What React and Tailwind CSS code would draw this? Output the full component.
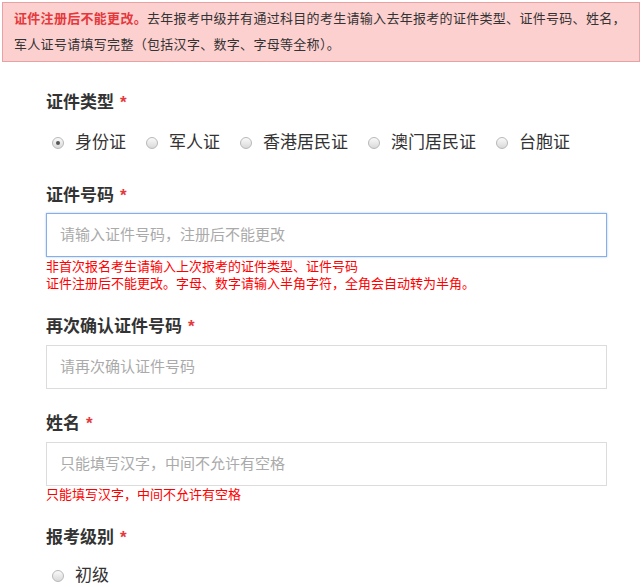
import React from 'react';

const font = { fontFamily: '"Liberation Sans", "Noto Sans CJK SC", sans-serif' };

function Label({ text, className = '' }) {
  return (
    <div className={`h-6 leading-6 text-[17px] font-bold text-[#333] ${className}`}>
      {text}
      <span className="ml-1.5 text-[#e4393c]">*</span>
    </div>
  );
}

function Radio({ label, checked }) {
  return (
    <label className="flex items-center mr-5">
      <span className="relative w-3 h-3 rounded-full border border-[#b8b8b8] bg-gradient-to-b from-[#fafafa] to-[#d9d9d9] flex items-center justify-center">
        {checked && <span className="w-1 h-1 rounded-full bg-[#555]" />}
      </span>
      <span className="ml-[11px] text-[17px] text-[#333]">{label}</span>
    </label>
  );
}

function Field({ placeholder, focused }) {
  return (
    <div
      className={`h-11 w-[561px] border bg-white flex items-center pl-[13px] text-[15px] text-[#aaa] ${
        focused ? 'border-[#86aee8] shadow-[0_0_2px_#a9c6f0]' : 'border-[#dcdcdc]'
      }`}
    >
      {placeholder}
    </div>
  );
}

export default function App() {
  const types = ['身份证', '军人证', '香港居民证', '澳门居民证', '台胞证'];

  return (
    <div className="w-[642px] h-[587px] bg-white overflow-hidden" style={font}>
      <div className="mx-[2px] mt-[2px] border border-[#e7a3a3] bg-[#fdd0d0] pl-[11px] pr-2 py-[3px] text-[13px] leading-[26px] text-[#333] tracking-[0.3px]">
        <div>
          <span className="font-bold text-[#e4393c]">证件注册后不能更改。</span>
          <span>去年报考中级并有通过科目的考生请输入去年报考的证件类型、证件号码、姓名，</span>
        </div>
        <div>军人证号请填写完整（包括汉字、数字、字母等全称）。</div>
      </div>

      <div className="pl-[46px]">
        <Label text="证件类型" className="mt-[29px]" />
        <div className="mt-4 h-6 flex items-center pl-[6px]">
          {types.map((t, i) => (
            <Radio key={t} label={t} checked={i === 0} />
          ))}
        </div>

        <Label text="证件号码" className="mt-[29px]" />
        <div className="mt-[5px]">
          <Field placeholder="请输入证件号码，注册后不能更改" focused />
        </div>
        <div className="text-[13px] leading-[17px] text-[#f00] mt-[1px]">
          <div>非首次报名考生请输入上次报考的证件类型、证件号码</div>
          <div>证件注册后不能更改。字母、数字请输入半角字符，全角会自动转为半角。</div>
        </div>

        <Label text="再次确认证件号码" className="mt-[23px]" />
        <div className="mt-[6px]">
          <Field placeholder="请再次确认证件号码" />
        </div>

        <Label text="姓名" className="mt-[23px]" />
        <div className="mt-[6px]">
          <Field placeholder="只能填写汉字，中间不允许有空格" />
        </div>
        <div className="text-[13px] leading-[17px] text-[#f00]">只能填写汉字，中间不允许有空格</div>

        <Label text="报考级别" className="mt-[23px]" />
        <div className="mt-[14px] h-6 flex items-center pl-[6px]">
          <Radio label="初级" />
        </div>
      </div>
    </div>
  );
}
